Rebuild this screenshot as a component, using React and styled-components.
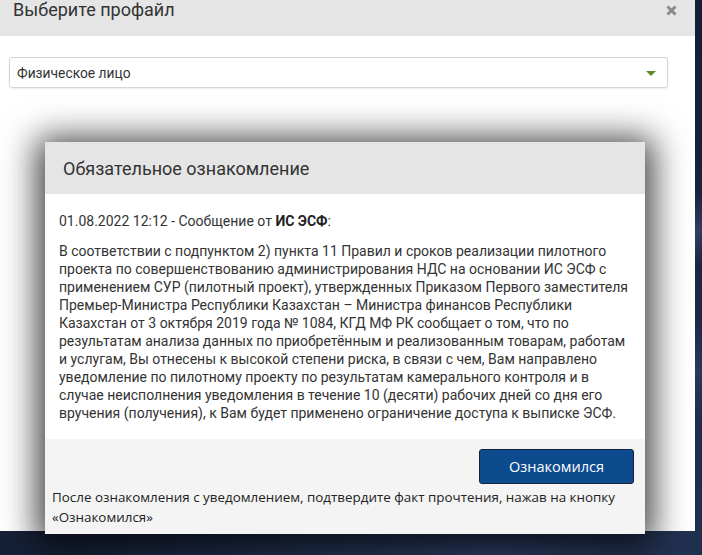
import React from 'react';
import styled, { createGlobalStyle } from 'styled-components';

const GlobalStyle = createGlobalStyle`
  html, body {
    margin: 0;
    padding: 0;
    height: 100%;
  }
  body {
    font-family: Roboto, 'Noto Sans', sans-serif;
    background: #1b2740;
    overflow: hidden;
  }
  #root {
    height: 100%;
  }
`;

const Screen = styled.div`
  position: relative;
  width: 702px;
  height: 555px;
  overflow: hidden;
  background:
    linear-gradient(160deg, transparent 55%, rgba(120, 140, 180, 0.25) 60%, transparent 64%),
    linear-gradient(200deg, transparent 40%, rgba(90, 110, 150, 0.2) 46%, transparent 52%),
    radial-gradient(ellipse at 70% 100%, #2b3d63 0%, #17223a 60%, #101829 100%);
`;

const ProfileDialog = styled.div`
  width: 695px;
  height: 531px;
  background: #fff;
  display: flex;
  flex-direction: column;
`;

const ProfileHeader = styled.div`
  height: 36px;
  background: #e5e5e5;
  display: flex;
  justify-content: space-between;
  align-items: flex-start;
  padding: 0 18px 0 13px;
`;

const ProfileTitle = styled.div`
  font-size: 18px;
  line-height: 20px;
  color: #333;
`;

const CloseButton = styled.button`
  border: 0;
  background: none;
  padding: 0;
  margin-top: 5px;
  cursor: pointer;
  display: flex;
`;

const ProfileBody = styled.div`
  padding: 21px 27px 0 9px;
`;

const Select = styled.div`
  height: 29px;
  border: 1px solid #d6d6d6;
  border-radius: 3px;
  box-shadow: 0 1px 2px rgba(0, 0, 0, 0.08);
  display: flex;
  align-items: center;
  justify-content: space-between;
  padding: 0 11px 0 7px;
  font-size: 13.8px;
  color: #333;
`;

const Caret = styled.span`
  width: 0;
  height: 0;
  border-left: 5px solid transparent;
  border-right: 5px solid transparent;
  border-top: 5px solid #5f8a2f;
  margin-top: 1px;
`;

const NoticeDialog = styled.div`
  position: absolute;
  left: 45px;
  top: 142px;
  width: 600px;
  height: 392px;
  background: #f4f4f4;
  box-shadow: 0 4px 32px 8px rgba(0, 0, 0, 0.75);
  display: flex;
  flex-direction: column;
`;

const NoticeHeader = styled.div`
  height: 52px;
  background: #e5e5e5;
  display: flex;
  align-items: center;
  padding: 0 18px;
  font-size: 18px;
  color: #333;
`;

const NoticeBody = styled.div`
  background: #fff;
  padding: 18px 10px 17px 14px;
  font-size: 14px;
  line-height: 18px;
  color: #333;
`;

const MetaLine = styled.p`
  margin: 0 0 12px;
  b {
    font-weight: 700;
    color: #222;
  }
`;

const Paragraph = styled.p`
  margin: 0;
`;

const NoticeFooter = styled.div`
  flex: 1;
  display: flex;
  flex-direction: column;
  padding: 10px 11px 0 7px;
`;

const ConfirmButton = styled.button`
  align-self: flex-end;
  width: 155px;
  height: 35px;
  background: #0c4b8e;
  border: 1px solid #15233a;
  border-radius: 3px;
  color: #fff;
  font-family: 'Open Sans', 'Noto Sans', sans-serif;
  font-size: 14.5px;
  cursor: pointer;
`;

const FooterNote = styled.div`
  margin-top: 3px;
  font-family: 'Open Sans', 'Noto Sans', sans-serif;
  font-size: 13.4px;
  line-height: 20px;
  color: #222;
`;

const CloseIcon = () => (
  <svg width="11" height="11" viewBox="0 0 11 11">
    <path d="M1.5 1.5 L9.5 9.5 M9.5 1.5 L1.5 9.5" stroke="#8a8a8a" strokeWidth="3" strokeLinecap="butt" />
  </svg>
);

const App = () => (
  <>
    <GlobalStyle />
    <Screen>
      <ProfileDialog>
        <ProfileHeader>
          <ProfileTitle>Выберите профайл</ProfileTitle>
          <CloseButton aria-label="Закрыть">
            <CloseIcon />
          </CloseButton>
        </ProfileHeader>
        <ProfileBody>
          <Select>
            <span>Физическое лицо</span>
            <Caret />
          </Select>
        </ProfileBody>
      </ProfileDialog>

      <NoticeDialog>
        <NoticeHeader>Обязательное ознакомление</NoticeHeader>
        <NoticeBody>
          <MetaLine>
            01.08.2022 12:12 - Сообщение от <b>ИС ЭСФ</b>:
          </MetaLine>
          <Paragraph>
            В соответствии с подпунктом 2) пункта 11 Правил и сроков реализации пилотного
            проекта по совершенствованию администрирования НДС на основании ИС ЭСФ с
            применением СУР (пилотный проект), утвержденных Приказом Первого заместителя
            Премьер-Министра Республики Казахстан – Министра финансов Республики
            Казахстан от 3 октября 2019 года № 1084, КГД МФ РК сообщает о том, что по
            результатам анализа данных по приобретённым и реализованным товарам, работам
            и услугам, Вы отнесены к высокой степени риска, в связи с чем, Вам направлено
            уведомление по пилотному проекту по результатам камерального контроля и в
            случае неисполнения уведомления в течение 10 (десяти) рабочих дней со дня его
            вручения (получения), к Вам будет применено ограничение доступа к выписке ЭСФ.
          </Paragraph>
        </NoticeBody>
        <NoticeFooter>
          <ConfirmButton>Ознакомился</ConfirmButton>
          <FooterNote>
            После ознакомления с уведомлением, подтвердите факт прочтения, нажав на кнопку
            «Ознакомился»
          </FooterNote>
        </NoticeFooter>
      </NoticeDialog>
    </Screen>
  </>
);

export default App;
